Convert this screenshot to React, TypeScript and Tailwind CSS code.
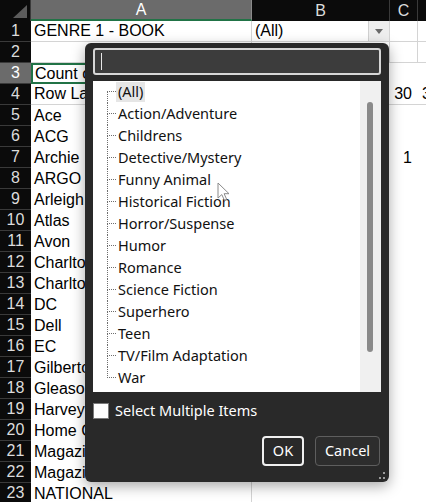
import type { ReactNode } from "react";

type Grid = "full" | "none" | "bottom" | "a";

interface Row {
  n: number;
  a?: string;
  c?: string;
  d?: string;
  grid: Grid;
}

const rows: Row[] = [
  { n: 1, a: "GENRE 1 - BOOK", grid: "full" },
  { n: 2, grid: "full" },
  { n: 3, a: "Count of GENRE 1", grid: "none" },
  { n: 4, a: "Row Labels", c: "30", d: "30", grid: "bottom" },
  { n: 5, a: "Ace", grid: "a" },
  { n: 6, a: "ACG", grid: "a" },
  { n: 7, a: "Archie", c: "1", grid: "a" },
  { n: 8, a: "ARGO", grid: "a" },
  { n: 9, a: "Arleigh", grid: "a" },
  { n: 10, a: "Atlas", grid: "a" },
  { n: 11, a: "Avon", grid: "a" },
  { n: 12, a: "Charlton", grid: "a" },
  { n: 13, a: "Charlton Press", grid: "a" },
  { n: 14, a: "DC", grid: "a" },
  { n: 15, a: "Dell", grid: "a" },
  { n: 16, a: "EC", grid: "a" },
  { n: 17, a: "Gilberton", grid: "a" },
  { n: 18, a: "Gleason", grid: "a" },
  { n: 19, a: "Harvey", grid: "a" },
  { n: 20, a: "Home Comics", grid: "a" },
  { n: 21, a: "Magazine Enterprises", grid: "a" },
  { n: 22, a: "Magazine Management", grid: "a" },
  { n: 23, a: "NATIONAL", grid: "a" },
];

const genres = [
  "(All)",
  "Action/Adventure",
  "Childrens",
  "Detective/Mystery",
  "Funny Animal",
  "Historical Fiction",
  "Horror/Suspense",
  "Humor",
  "Romance",
  "Science Fiction",
  "Superhero",
  "Teen",
  "TV/Film Adaptation",
  "War",
];

const arial = "font-['Liberation_Sans',Arial,sans-serif]";
const ui = "font-['Noto_Sans','Open_Sans',sans-serif]";

function Cell({ className, children }: { className: string; children?: ReactNode }) {
  return (
    <div className={`h-[21px] shrink-0 flex items-center overflow-hidden whitespace-nowrap text-[16px] text-black ${className}`}>
      {children}
    </div>
  );
}

function SheetRow({ row }: { row: Row }) {
  const full = row.grid === "full";
  const bottom = full || row.grid === "bottom" ? "border-b" : "";
  const sel = row.n === 3;
  return (
    <div className="flex h-[21px]">
      <div
        className={`w-[31px] h-[21px] shrink-0 flex items-center justify-center border-b border-[#3a3a3a] text-[16px] ${
          sel ? "bg-[#6b6b6b] text-white" : "bg-[#0b0b0b] text-[#dcdcdc]"
        }`}
      >
        {row.n}
      </div>
      {sel ? (
        <Cell className="w-[221px] pl-[2px] border-2 border-[#217346]">{row.a}</Cell>
      ) : (
        <Cell
          className={`w-[221px] pl-[3px] border-[#d4d4d4] ${bottom} ${full || row.grid === "a" ? "border-r" : ""}`}
        >
          {row.a}
        </Cell>
      )}
      <Cell className={`w-[138px] border-[#d4d4d4] ${bottom} ${full ? "border-r" : ""}`}>
        {row.n === 1 && (
          <div className="flex w-full h-full items-center">
            <span className="flex-1 pl-[3px]">(All)</span>
            <div className="w-[21px] h-full bg-[#eeeeee] border-l border-[#d0d0d0] flex items-center justify-center">
              <svg width="8" height="5" viewBox="0 0 8 5">
                <path d="M0 0h8L4 5z" fill="#6a6a6a" />
              </svg>
            </div>
          </div>
        )}
      </Cell>
      <Cell className={`w-[28px] justify-end pr-[6px] border-[#d4d4d4] ${bottom} ${full ? "border-r" : ""}`}>
        {row.c}
      </Cell>
      <Cell className={`flex-1 pl-[4px] border-[#d4d4d4] ${bottom}`}>{row.d}</Cell>
    </div>
  );
}

function Filter() {
  return (
    <div
      className={`absolute left-[85px] top-[43px] w-[304px] h-[439px] rounded-[6px] bg-[#292929] shadow-[0_4px_14px_rgba(0,0,0,0.35)] flex flex-col px-2 pt-[5px] ${ui}`}
    >
      {/* search */}
      <div className="h-[27px] rounded-[3px] border-2 border-[#d6d6d6] bg-[#3c3c3c] flex items-center pl-[6px]">
        <div className="w-px h-[17px] bg-[#e6e6e6]" />
      </div>

      {/* list */}
      <div className="mt-[6px] h-[311px] bg-white flex">
        <div className="flex-1 flex flex-col pl-[14px]">
          {genres.map((g, i) => (
            <div key={g} className="flex h-[22px]">
              <div className="w-[9px] flex flex-col shrink-0">
                <div className={`h-[11px] border-b border-dotted border-[#6e6e6e] ${i > 0 ? "border-l" : ""}`} />
                <div className={`flex-1 border-dotted border-[#6e6e6e] ${i < genres.length - 1 ? "border-l" : ""}`} />
              </div>
              <span
                className={`h-[20px] mt-px px-[2px] pb-px flex items-center text-[14.5px] text-[#111] whitespace-nowrap ${
                  i === 0 ? "bg-[#e6e6e6]" : ""
                }`}
              >
                {g}
              </span>
            </div>
          ))}
        </div>
        <div className="w-[21px] bg-[#f0f0f0] pt-[21px] pl-[7px]">
          <div className="w-[6px] h-[250px] rounded-full bg-[#8a8a8a]" />
        </div>
      </div>

      {/* select multiple */}
      <div className="mt-[10px] h-[18px] flex items-center gap-[6px]">
        <div className="w-[16px] h-[16px] bg-white border border-[#7a7a7a]" />
        <span className="text-[14.5px] text-white pb-px">Select Multiple Items</span>
      </div>

      {/* buttons */}
      <div className="mt-[16px] flex justify-end gap-[11px] pr-px">
        <button className="w-[42px] h-[30px] rounded-[4px] border-2 border-[#f0f0f0] text-white text-[14.5px]">OK</button>
        <button className="w-[65px] h-[30px] rounded-[4px] border border-[#5e5e5e] bg-[#2d2d2d] text-white text-[14.5px]">
          Cancel
        </button>
      </div>

      {/* resize grip */}
      <svg className="absolute right-[2px] bottom-[1px]" width="9" height="10" viewBox="0 0 9 10">
        <rect x="1" y="6" width="2" height="2" fill="#9a9a9a" />
        <rect x="5" y="1" width="2" height="2" fill="#9a9a9a" />
        <rect x="5" y="6" width="2" height="2" fill="#9a9a9a" />
      </svg>
    </div>
  );
}

export default function App() {
  return (
    <main className={`relative w-[426px] h-[502px] overflow-hidden bg-white ${arial}`}>
      {/* column headers */}
      <div className="flex h-[21px] bg-[#0b0b0b] text-[16px]">
        <div className="w-[31px] h-[21px] shrink-0 flex items-end justify-end pr-[3px] pb-[3px] border-r border-[#3a3a3a]">
          <svg width="14" height="13" viewBox="0 0 14 13">
            <path d="M14 0V13H0z" fill="#5c5c5c" />
          </svg>
        </div>
        <div className="w-[221px] h-[21px] shrink-0 flex items-center justify-center bg-[#6b6b6b] text-white border-b-2 border-[#217346] border-r border-r-[#8a8a8a]">
          A
        </div>
        <div className="w-[138px] h-[21px] shrink-0 flex items-center justify-center text-[#dcdcdc] border-r border-[#3a3a3a]">
          B
        </div>
        <div className="w-[28px] h-[21px] shrink-0 flex items-center justify-center text-[#dcdcdc] border-r border-[#3a3a3a]">
          C
        </div>
        <div className="flex-1" />
      </div>

      {rows.map((r) => (
        <SheetRow key={r.n} row={r} />
      ))}

      <Filter />

      {/* mouse pointer */}
      <svg className="absolute left-[217px] top-[182px]" width="14" height="20" viewBox="0 0 14 20">
        <path
          d="M1 1V16L4.8 12.6L7.6 18.6L9.8 17.6L7.1 11.7H12Z"
          fill="rgba(255,255,255,0.55)"
          stroke="#8a8a8a"
          strokeWidth="1"
          strokeLinejoin="round"
        />
      </svg>
    </main>
  );
}
